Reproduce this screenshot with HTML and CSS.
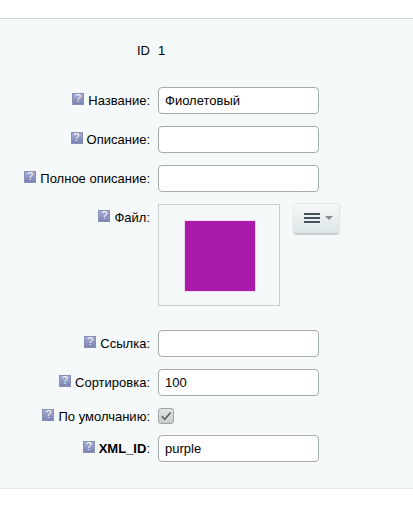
FILE: index.html
```html
<!DOCTYPE html>
<html lang="en">
<head>
  <meta charset="UTF-8">
  <title>Редактирование</title>
  <link rel="stylesheet" href="styles.css">
</head>
<body>

  <form class="edit-panel">

    <div class="row row-id">
      <div class="label">ID</div>
      <div class="value">1</div>
    </div>

    <div class="row">
      <div class="label"><span class="help">?</span>Название:</div>
      <input type="text" class="text-field" value="Фиолетовый">
    </div>

    <div class="row">
      <div class="label"><span class="help">?</span>Описание:</div>
      <input type="text" class="text-field">
    </div>

    <div class="row">
      <div class="label"><span class="help">?</span>Полное описание:</div>
      <input type="text" class="text-field">
    </div>

    <!-- File preview with its menu button -->
    <div class="row row-file">
      <div class="label label-file"><span class="help">?</span>Файл:</div>
      <div class="file-box"><div class="swatch"></div></div>
      <button type="button" class="menu-btn">
        <span class="bars"><i></i><i></i><i></i></span>
        <span class="caret"></span>
      </button>
    </div>

    <div class="row">
      <div class="label"><span class="help">?</span>Ссылка:</div>
      <input type="text" class="text-field">
    </div>

    <div class="row">
      <div class="label"><span class="help">?</span>Сортировка:</div>
      <input type="text" class="text-field" value="100">
    </div>

    <div class="row row-check">
      <div class="label"><span class="help">?</span>По умолчанию:</div>
      <span class="check">
        <svg width="12" height="12" viewBox="0 0 12 12"><path d="M1.8 6.2 L4.8 9.2 L10.6 2.6" fill="none" stroke="#54595c" stroke-width="1.5"/></svg>
      </span>
    </div>

    <div class="row">
      <div class="label"><span class="help">?</span><b>XML_ID</b>:</div>
      <input type="text" class="text-field" value="purple">
    </div>

  </form>

</body>
</html>
```

FILE: styles.css
```css
body {
  margin: 0;
  background: #fff;
  font-family: "Liberation Sans", Arial, sans-serif;
  font-size: 13px;
  color: #000;
}

.edit-panel {
  margin-top: 18px;
  height: 471px;
  box-sizing: border-box;
  padding-top: 22px;
  background: #f5f9f9;
  border-top: 1px solid #d0d7d8;
  border-bottom: 1px solid #e0e7e8;
}

.row {
  display: flex;
  align-items: center;
  margin-bottom: 12px;
}

.row-id {
  height: 18px;
  margin-bottom: 28px;
}

.row-file {
  align-items: flex-start;
  margin-bottom: 24px;
}

.row-check {
  margin-bottom: 11px;
}

.label {
  width: 150px;
  margin-right: 8px;
  flex-shrink: 0;
  text-align: right;
  color: #000;
}

.label-file {
  padding-top: 6px;
}

.value {
  color: #000;
}

.help {
  display: inline-block;
  width: 12px;
  height: 12px;
  margin-right: 4px;
  vertical-align: 3px;
  box-sizing: border-box;
  background: linear-gradient(#a6acd2, #7c84b6);
  border: 1px solid #8a90b5;
  color: #fff;
  font-size: 10px;
  line-height: 10px;
  text-align: center;
}

.text-field {
  width: 161px;
  height: 27px;
  box-sizing: border-box;
  margin: 0;
  padding: 0 6px;
  background: #fff;
  border: 1px solid #a4abac;
  border-radius: 4px;
  font-family: "Liberation Sans", Arial, sans-serif;
  font-size: 13px;
  color: #000;
}

.file-box {
  width: 122px;
  height: 102px;
  box-sizing: border-box;
  display: flex;
  align-items: center;
  justify-content: center;
  padding: 2px 0 0 2px;
  border: 1px solid #c9cfd0;
}

.swatch {
  width: 72px;
  height: 72px;
  box-sizing: border-box;
  background: #aa1bab;
  border: 1px solid #f0dcef;
}

.menu-btn {
  display: flex;
  align-items: center;
  justify-content: center;
  gap: 5px;
  width: 47px;
  height: 31px;
  margin: -1px 0 0 13px;
  padding: 0 0 2px 3px;
  background: linear-gradient(#f7fafa, #dde6e7);
  border: 1px solid #e3e8e9;
  border-bottom-color: #c3cccd;
  border-radius: 4px;
  box-shadow: 0 1px 1px #c8d0d1;
}

.bars {
  display: flex;
  flex-direction: column;
  gap: 2px;
}

.bars i {
  display: block;
  width: 16px;
  height: 2px;
  background: #47535b;
}

.caret {
  width: 0;
  height: 0;
  border-left: 4px solid transparent;
  border-right: 4px solid transparent;
  border-top: 4px solid #838c94;
}

.check {
  display: flex;
  align-items: center;
  justify-content: center;
  width: 16px;
  height: 16px;
  box-sizing: border-box;
  background: linear-gradient(#e2e4e5, #c9cccd);
  border: 1px solid #9ea3a5;
  border-radius: 3px;
}
```
